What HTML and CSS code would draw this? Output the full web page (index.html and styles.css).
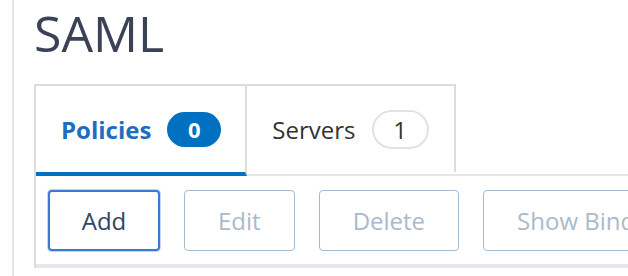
FILE: index.html
```html
<!DOCTYPE html>
<html lang="en">
<head>
    <meta charset="UTF-8">
    <meta name="viewport" content="width=device-width, initial-scale=1.0">
    <title>SAML</title>
    <link rel="stylesheet" href="styles.css">
</head>
<body>
    <div class="page">
        <h1 class="title">SAML</h1>

        <div class="panel">
            <div class="tabs">
                <div class="tab active">
                    <span class="tab-label">Policies</span>
                    <span class="badge badge-filled">0</span>
                </div>
                <div class="tab">
                    <span class="tab-label">Servers</span>
                    <span class="badge badge-outline">1</span>
                </div>
            </div>

            <div class="toolbar">
                <button class="btn btn-focus">Add</button>
                <button class="btn" disabled>Edit</button>
                <button class="btn" disabled>Delete</button>
                <button class="btn" disabled>Show Bindings</button>
            </div>
        </div>
    </div>
</body>
</html>
```

FILE: styles.css
```css
body { margin: 0; font-family: "Open Sans", "Noto Sans", sans-serif; background: #fff; overflow: hidden; }
.page { margin-left: 12px; border-left: 2px solid #e3e6ea; padding-left: 20px; min-height: 100vh; }
.title { margin: 0; padding-top: 3px; font-size: 50px; font-weight: 400; line-height: 60px; color: #3b4256; }

.panel { margin-top: 21px; border-left: 2px solid #dcdcdc; }
.tabs { display: flex; border-bottom: 2px solid #e6e6e6; }
.tab { display: flex; align-items: center; gap: 16px; height: 86px; padding: 0 25px 0 25px; border-top: 2px solid #dcdcdc; border-right: 2px solid #dcdcdc; }
.tab.active { border-bottom: 4px solid #0070c0; margin-bottom: -2px; padding-right: 24px; }
.tab-label { font-size: 24px; color: #333; }
.tab.active .tab-label { font-weight: 700; color: #1f6dbf; }

.badge { display: flex; align-items: center; justify-content: center; border-radius: 20px; box-sizing: border-box; }
.badge-filled { width: 54px; height: 35px; background: #0070c0; color: #fff; font-size: 22px; font-weight: 700; }
.badge-outline { width: 57px; height: 39px; border: 2px solid #e2e2e2; color: #333; font-size: 24px; }

.toolbar { display: flex; gap: 24px; padding: 14px 0 13px 12px; border-bottom: 4px solid #e4e7eb; overflow: hidden; }
.btn { flex: none; height: 61px; padding: 0 33px; font-family: inherit; font-size: 24px; background: #fff; color: #2f4467; border: 1px solid #a7bacb; border-radius: 4px; }
.btn:disabled { color: #abbaca; }
.btn-focus { border: 2px solid #3b78d4; box-shadow: 0 0 0 1px rgba(59, 120, 212, 0.3); width: 112px; padding: 0; }
```
